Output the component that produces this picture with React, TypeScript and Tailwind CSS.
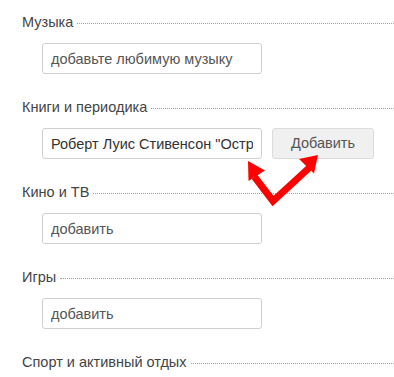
import React from "react";

const font = { fontFamily: '"Liberation Sans", Arial, sans-serif' };

function Label({ text }: { text: string }) {
  return (
    <div className="flex items-center h-4 pl-[22px]">
      <span className="text-[14.5px] leading-4 text-[#444] whitespace-nowrap">{text}</span>
      <div className="flex-1 ml-[4px] mt-[3px] border-t border-dotted border-[#a0a0a0]" />
    </div>
  );
}

function Field({ value, placeholder }: { value?: string; placeholder?: string }) {
  return (
    <input
      readOnly
      value={value ?? ""}
      placeholder={placeholder}
      className="w-[220px] h-[31px] border border-[#cfcfcf] rounded-[3px] bg-white px-[8px] text-[14.5px] text-[#333] placeholder:text-[#555] outline-none"
      style={font}
    />
  );
}

export default function App() {
  const sections: { label: string; value?: string; placeholder?: string; button?: boolean }[] = [
    { label: "Музыка", placeholder: "добавьте любимую музыку" },
    { label: "Книги и периодика", value: 'Роберт Луис Стивенсон "Остров сокровищ"', button: true },
    { label: "Кино и ТВ", placeholder: "добавить" },
    { label: "Игры", placeholder: "добавить" },
  ];
  return (
    <div className="relative w-[394px] h-[377px] bg-white overflow-hidden pt-[14px]" style={font}>
      {sections.map((s, i) => (
        <div key={i} className="flex flex-col">
          <Label text={s.label} />
          <div className="flex items-center gap-[10px] pl-[42px] mt-[13px] mb-[25px]">
            <Field value={s.value} placeholder={s.placeholder} />
            {s.button && (
              <button
                className="w-[102px] h-[31px] border border-[#dcdcdc] rounded-[3px] bg-[#f0f0f0] text-[14.5px] text-[#555]"
                style={font}
              >
                Добавить
              </button>
            )}
          </div>
        </div>
      ))}
      <Label text="Спорт и активный отдых" />
      <svg className="absolute left-0 top-0 pointer-events-none" width="394" height="377">
        <polyline
          points="254.5,176.8 273,201 309,168"
          fill="none"
          stroke="#ff0000"
          strokeWidth="7"
          strokeLinejoin="miter"
        />
        <polygon points="248,161 265,170.5 248.5,181" fill="#ff0000" />
        <polygon points="318,155 314,173.5 299,159" fill="#ff0000" />
      </svg>
    </div>
  );
}
